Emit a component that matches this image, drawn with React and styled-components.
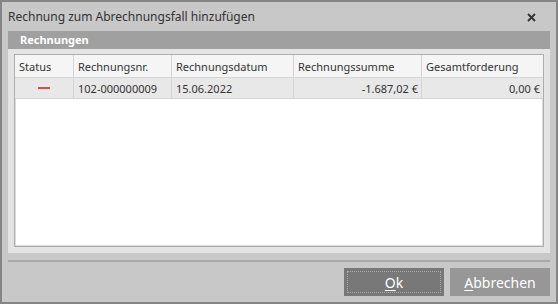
import React from "react";
import styled, { createGlobalStyle } from "styled-components";

const Global = createGlobalStyle`
  html, body { margin: 0; padding: 0; background: #c8c8c8; }
  body { font-family: "Noto Sans", "Open Sans", sans-serif; }
`;

const Window = styled.div`
  width: 558px;
  height: 304px;
  box-sizing: border-box;
  border: 2px solid #858585;
  background: #c8c8c8;
  display: flex;
  flex-direction: column;
`;

const TitleBar = styled.div`
  height: 29px;
  padding: 0 20px 0 6px;
  display: flex;
  align-items: center;
  justify-content: space-between;
  font-size: 12px;
  color: #333;
`;

const Close = styled.svg`
  width: 9px;
  height: 9px;
  margin-top: 1px;
`;

const Panel = styled.div`
  margin: 0 6px;
  height: 222px;
  display: flex;
  flex-direction: column;
`;

const PanelHeader = styled.div`
  height: 18px;
  line-height: 18px;
  padding-left: 12px;
  background: #a0a0a0;
  color: #fff;
  font-weight: 700;
  font-size: 11px;
`;

const PanelBody = styled.div`
  flex: 1;
  background: #e4e4e4;
  padding: 5px 6px 6px;
  display: flex;
`;

const Table = styled.div`
  flex: 1;
  background: #fff;
  border: 1px solid #adadad;
  box-shadow: inset 0 0 0 1px #dcdcdc;
  font-size: 11px;
  color: #333;
`;

const Row = styled.div`
  display: grid;
  grid-template-columns: 59px 98px 122px 128px 1fr;
  height: ${(p) => p.$h}px;
  background: ${(p) => p.$bg};
  border-bottom: 1px solid #d4d4d4;
`;

const Cell = styled.div`
  display: flex;
  align-items: center;
  justify-content: ${(p) => (p.$align === "right" ? "flex-end" : p.$align === "center" ? "center" : "flex-start")};
  padding: 0 3px 0 4px;
  border-right: 1px solid #d4d4d4;
  white-space: nowrap;
  overflow: hidden;
  &:last-child { border-right: none; }
`;

const Dash = styled.span`
  display: block;
  width: 12px;
  height: 2px;
  background: #e04848;
  margin-right: 2px;
`;

const Separator = styled.div`
  height: 2px;
  margin: 7px 6px 0;
  background: #a9a9a9;
`;

const Footer = styled.div`
  display: flex;
  justify-content: flex-end;
  gap: 6px;
  padding: 6px 6px 6px;
`;

const Button = styled.button`
  width: 100px;
  height: 28px;
  border: none;
  background: ${(p) => (p.$primary ? "#787878" : "#979797")};
  color: #fff;
  font-family: inherit;
  font-size: 14px;
  position: relative;
  padding: 0;
  &::after {
    content: "";
    display: ${(p) => (p.$primary ? "block" : "none")};
    position: absolute;
    inset: 3px;
    border: 1px dotted #a8a8a8;
  }
  u { text-underline-offset: 2px; }
`;

const columns = ["Status", "Rechnungsnr.", "Rechnungsdatum", "Rechnungssumme", "Gesamtforderung"];

export default function App() {
  return (
    <>
      <Global />
      <Window>
        <TitleBar>
          <span>Rechnung zum Abrechnungsfall hinzufügen</span>
          <Close viewBox="0 0 9 9">
            <path d="M1 1L8 8M8 1L1 8" stroke="#333" strokeWidth="1.8" />
          </Close>
        </TitleBar>
        <Panel>
          <PanelHeader>Rechnungen</PanelHeader>
          <PanelBody>
            <Table>
              <Row $h={22} $bg="#f5f5f5">
                {columns.map((c) => (
                  <Cell key={c}>{c}</Cell>
                ))}
              </Row>
              <Row $h={20} $bg="#e8e8e8">
                <Cell $align="center"><Dash /></Cell>
                <Cell>102-000000009</Cell>
                <Cell>15.06.2022</Cell>
                <Cell $align="right">-1.687,02 €</Cell>
                <Cell $align="right">0,00 €</Cell>
              </Row>
            </Table>
          </PanelBody>
        </Panel>
        <Separator />
        <Footer>
          <Button $primary><u>O</u>k</Button>
          <Button><u>A</u>bbrechen</Button>
        </Footer>
      </Window>
    </>
  );
}
